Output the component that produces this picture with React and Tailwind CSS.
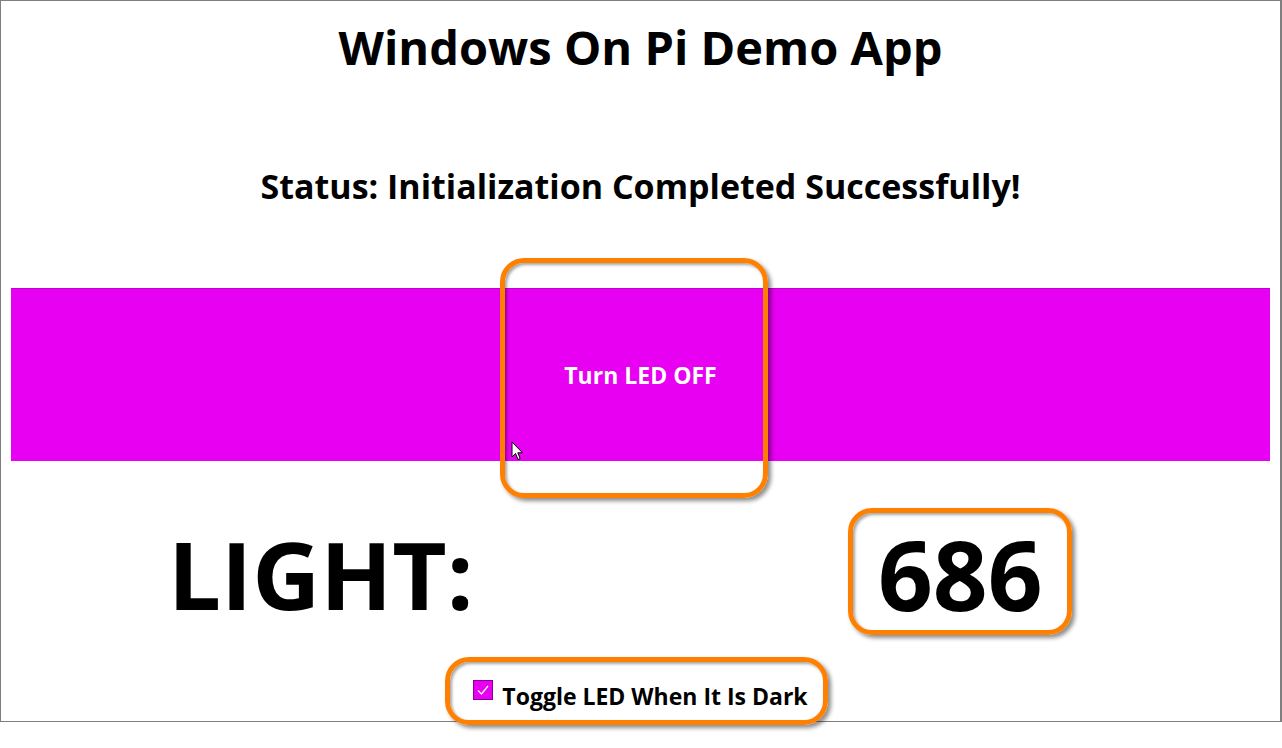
import React from 'react';

const font = { fontFamily: '"Open Sans", "Noto Sans", sans-serif' };

const Callout = ({ className }) => (
  <div
    className={`absolute border-[5px] border-[#ff8000] rounded-[24px] shadow-[3px_3px_4px_rgba(0,0,0,0.45),inset_2px_2px_3px_rgba(0,0,0,0.35)] pointer-events-none ${className}`}
  />
);

const Cursor = () => (
  <svg className="absolute left-[511px] top-[441px]" width="13" height="20" viewBox="0 0 13 20">
    <path d="M1 1 L1 16 L4.5 12.5 L7 18.5 L9.2 17.6 L6.8 11.8 L11.5 11.8 Z" fill="#fff" stroke="#000" strokeWidth="1" strokeLinejoin="round" />
  </svg>
);

const App = () => {
  return (
    <div className="relative w-[1282px] h-[748px] bg-white overflow-hidden" style={font}>
      <div className="w-[1282px] h-[722px] border border-[#7f7f7f] border-r-2 flex flex-col text-black">
        <div className="h-[92px] flex items-center justify-center">
          <h1 className="text-[47px] font-bold leading-none">Windows On Pi Demo App</h1>
        </div>
        <div className="h-[186px] flex items-center justify-center">
          <h2 className="text-[34px] font-bold leading-none">Status: Initialization Completed Successfully!</h2>
        </div>
        <button className="mt-[9px] mx-[10px] h-[173px] bg-[#e800f2] border-t border-[#c000d0] flex items-center justify-center">
          <span className="text-white text-[23px] font-bold">Turn LED OFF</span>
        </button>
        <div className="h-[226px] grid grid-cols-2 items-center">
          <div className="text-center text-[94px] font-bold leading-none">LIGHT:</div>
          <div className="text-center text-[96px] font-bold leading-none">686</div>
        </div>
        <label className="h-[18px] flex items-center justify-center gap-[9px]">
          <span className="w-[20px] h-[20px] -mt-[12px] bg-[#e800f2] border border-[#8a0090] flex items-center justify-center">
            <svg width="14" height="14" viewBox="0 0 14 14">
              <path d="M2 7.5 L5.5 11 L12 3" fill="none" stroke="#fff" strokeWidth="1.3" />
            </svg>
          </span>
          <span className="text-[23px] font-bold leading-none">Toggle LED When It Is Dark</span>
        </label>
      </div>

      <Callout className="left-[500px] top-[258px] w-[268px] h-[240px]" />
      <Callout className="left-[848px] top-[508px] w-[224px] h-[127px]" />
      <Callout className="left-[445px] top-[657px] w-[383px] h-[68px]" />
      <Cursor />
    </div>
  );
};

export default App;
